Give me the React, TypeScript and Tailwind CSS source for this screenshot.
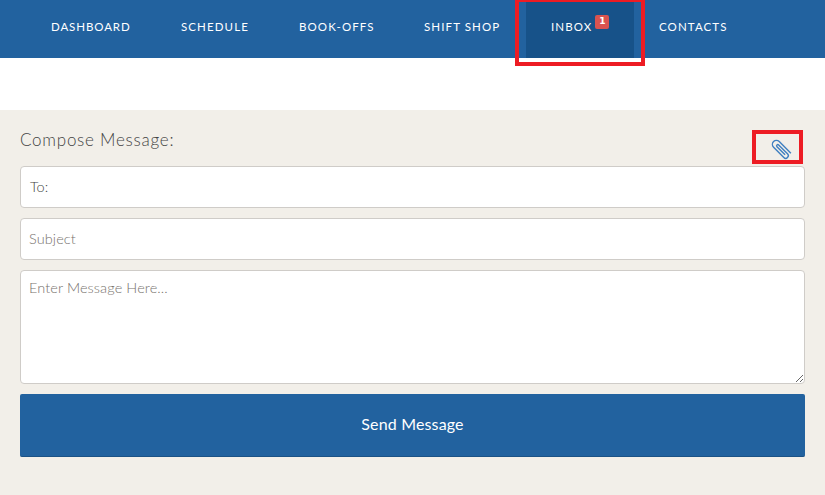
import React from 'react';

const navItems = [
  { label: 'DASHBOARD', width: 'w-[130px] tracking-[0.9px]' },
  { label: 'SCHEDULE', width: 'w-[118px]' },
  { label: 'BOOK-OFFS', width: 'w-[125px]' },
  { label: 'SHIFT SHOP', width: 'w-[127px]' },
];

const fieldClass =
  'w-full rounded-[4px] border border-[#cfccc8] bg-white px-2 text-[14.5px] font-light tracking-[0.1px] text-[#555] placeholder:text-[#77726d] outline-none';

export default function App() {
  return (
    <div className="relative min-h-[495px] bg-white font-['Lato',sans-serif]">
      <nav className="flex h-[58px] items-stretch bg-[#22629f] pl-[26px] text-[11.5px] tracking-[1.1px] text-white">
        {navItems.map(item => (
          <a key={item.label} className={`flex items-center pb-[4px] pl-[25px] whitespace-nowrap ${item.width}`}>
            {item.label}
          </a>
        ))}
        <a className="flex w-[108px] items-center bg-[#175289] pb-[4px] pl-[25px] whitespace-nowrap">
          <span>INBOX</span>
          <span className="mb-[10px] ml-[3px] flex h-[14px] w-[14px] items-center justify-center rounded-[2px] bg-[#d9534f] font-['DejaVu_Sans',sans-serif] text-[9px] font-bold tracking-normal">
            1
          </span>
        </a>
        <a className="flex items-center px-[25px] pb-[4px] whitespace-nowrap">CONTACTS</a>
      </nav>

      <div className="h-[52px]" />

      <main className="flex h-[385px] flex-col gap-[10px] bg-[#f2efe9] px-[20px] pt-[20px]">
        <div className="flex h-[26px] items-start justify-between">
          <h2 className="text-[17px] leading-[19px] font-light tracking-[0.75px] text-[#444]">Compose Message:</h2>
          <div className="mt-[7px] mr-[12px] h-[24px]">
            <svg width="24" height="24" viewBox="0 0 24 24" fill="none" stroke="#3f7fc0" strokeWidth="1.4">
              <g transform="rotate(45 12 12)">
                <path d="M22 8H5.5a4 4 0 0 0 0 8H20a2.6 2.6 0 0 0 0-5.2H7.5a1.2 1.2 0 0 0 0 2.4H19" />
              </g>
            </svg>
          </div>
        </div>
        <div className="flex h-[42px] items-center rounded-[4px] border border-[#cfccc8] bg-white px-[9px] text-[14.5px] font-light text-[#444]">
          To:
        </div>
        <input className={`${fieldClass} h-[42px] pb-[2px]`} placeholder="Subject" />
        <textarea className={`${fieldClass} block h-[114px] py-[6px]`} placeholder="Enter Message Here..." />
        <button className="h-[63px] w-full rounded-[2px] border-b border-[#1b5285] bg-[#22629f] pb-[2px] text-[16px] tracking-[0.15px] text-white">
          Send Message
        </button>
      </main>

      {/* red callouts drawn on top of the screenshot */}
      <div className="pointer-events-none absolute top-[-2px] left-[515px] h-[68px] w-[130px] border-[4px] border-[#ed1c24]" />
      <div className="pointer-events-none absolute top-[130px] left-[752px] h-[34px] w-[51px] border-[4px] border-[#ed1c24]" />
    </div>
  );
}
